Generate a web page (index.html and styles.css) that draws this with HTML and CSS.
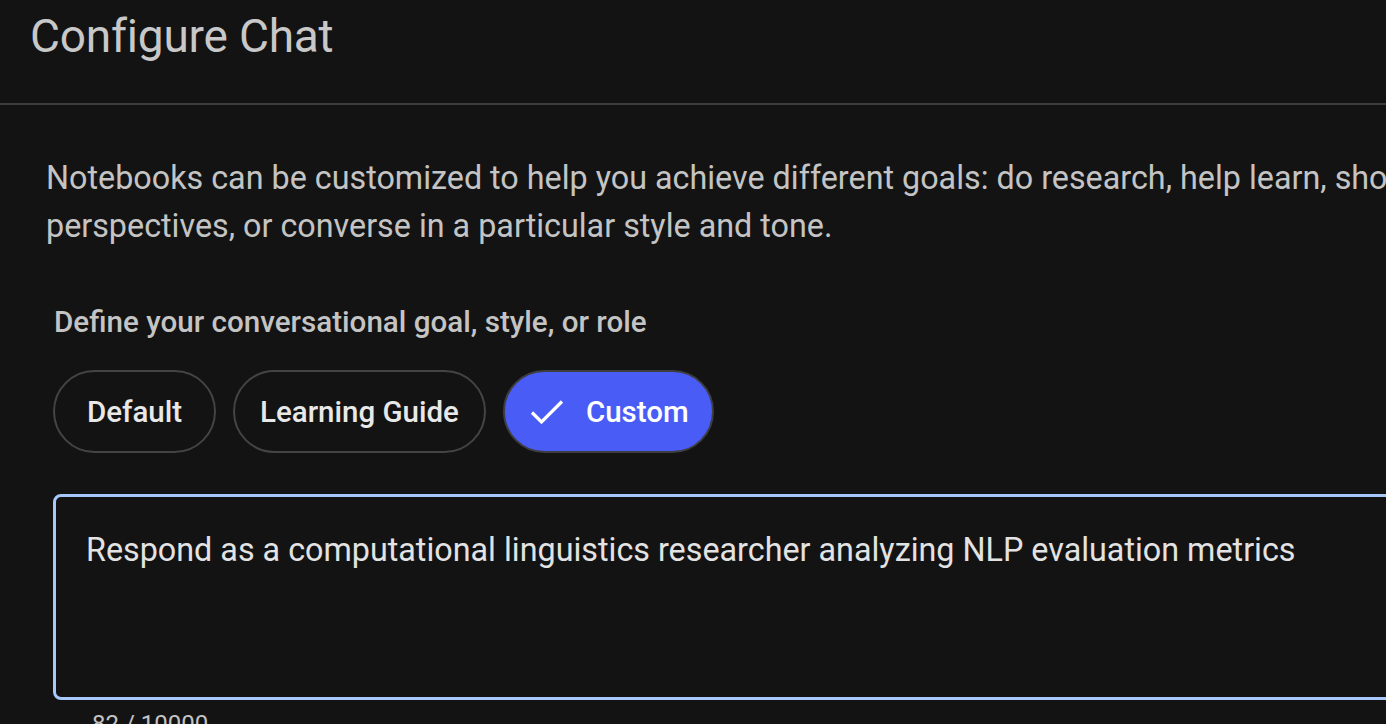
FILE: index.html
```html
<!DOCTYPE html>
<html>
<head>
<meta charset="utf-8">
<link rel="stylesheet" href="styles.css">
</head>
<body>
<div class="dialog">
  <header class="header">
    <h1 class="title">Configure Chat</h1>
  </header>
  <main class="content">
    <p class="intro">Notebooks can be customized to help you achieve different goals: do research, help learn, show different<br>perspectives, or converse in a particular style and tone.</p>
    <div class="label">Define your conversational goal, style, or role</div>
    <div class="chips">
      <button class="chip chip-default">Default</button>
      <button class="chip">Learning Guide</button>
      <button class="chip chip-selected">
        <svg class="check" viewBox="0 0 34 26" width="34" height="26"><path d="M2 13.5l9.5 9.5L32 2.5" fill="none" stroke="#fff" stroke-width="3.2"/></svg>
        Custom
      </button>
    </div>
    <div class="field">
      <div class="field-text">Respond as a computational linguistics researcher analyzing NLP evaluation metrics</div>
    </div>
    <div class="count">82 / 10000</div>
  </main>
</div>
</body>
</html>
```

FILE: styles.css
```css
html, body {
  margin: 0;
  padding: 0;
  background: #131313;
  overflow: hidden;
}
body {
  font-family: Roboto, "Open Sans", sans-serif;
  color: #e3e3e3;
  width: 1386px;
  height: 724px;
}
.dialog {
  width: 1500px;
}
.header {
  height: 103px;
  border-bottom: 2px solid #3c3c3f;
  padding-left: 30px;
}
.title {
  margin: 0;
  padding-top: 10px;
  font-size: 46px;
  font-weight: 400;
  line-height: 52px;
  color: #c8c8c8;
  letter-spacing: -0.2px;
}
.content {
  padding-left: 46px;
}
.intro {
  margin: 49px 0 0 0;
  font-size: 32.3px;
  line-height: 48px;
  color: #c4c4c4;
  white-space: nowrap;
}
.label {
  margin: 52px 0 0 8px;
  font-size: 29.6px;
  font-weight: 500;
  line-height: 40px;
  color: #c4c4c4;
}
.chips {
  display: flex;
  gap: 17px;
  margin: 28px 0 0 7px;
}
.chip {
  font-family: inherit;
  height: 83px;
  padding: 0 25px;
  border-radius: 42px;
  border: 2px solid #444446;
  background: transparent;
  color: #e8e8e8;
  font-size: 29.5px;
  font-weight: 500;
  display: flex;
  align-items: center;
  justify-content: center;
  gap: 22px;
}
.chip-default {
  min-width: 163px;
}
.chip-selected {
  background: #4a5cf6;
  color: #ffffff;
  border-color: #3e3e40;
  padding-right: 23px;
}
.check {
  display: block;
}
.field {
  margin: 41px 0 0 7px;
  border: 3px solid #a8c7fa;
  border-radius: 8px;
  padding: 0 30px;
  box-sizing: border-box;
  height: 206px;
  width: 1400px;
}
.field-text {
  margin-top: 33px;
  font-size: 32.3px;
  line-height: 40px;
  color: #e3e3e3;
  white-space: nowrap;
}
.count {
  margin: 10px 0 0 46px;
  font-size: 24px;
  line-height: 28px;
  color: #c4c4c4;
}
```
